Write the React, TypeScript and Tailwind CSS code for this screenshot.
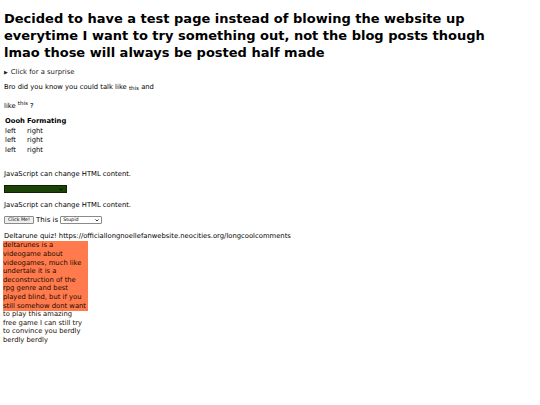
import React from "react";

export default function App() {
  return (
    <div className="w-[540px] h-[405px] bg-white text-black font-['DejaVu_Sans',sans-serif] px-[4px] overflow-hidden">
      <h1 className="w-[510px] text-[13px] font-bold leading-[17px] pt-[10px] m-0">
        Decided to have a test page instead of blowing the website up everytime I want to try something out, not the blog posts though lmao those will always be posted half made
      </h1>
      <div className="mt-[7px] text-[6.8px] leading-[9px] text-[#222]">
        <span className="text-[5px] mr-[3px]">▶</span>Click for a surprise
      </div>
      <p className="mt-[6px] text-[6.8px] leading-[9px]">
        Bro did you know you could talk like <sub className="text-[5.5px]">this</sub> and
      </p>
      <p className="mt-[10px] text-[6.8px] leading-[9px]">
        like <sup className="text-[5.5px]">this</sup> ?
      </p>
      <table className="mt-[6px] text-[6.8px] leading-[9.6px] border-separate border-spacing-0">
        <thead>
          <tr>
            <th className="font-bold text-left pl-[1px] pr-[2px]">Oooh</th>
            <th className="font-bold text-left">Formating</th>
          </tr>
        </thead>
        <tbody>
          {[0, 1, 2].map((i) => (
            <tr key={i}>
              <td className="pl-[1px]">left</td>
              <td>right</td>
            </tr>
          ))}
        </tbody>
      </table>
      <p className="mt-[15px] text-[6.8px] leading-[9px]">JavaScript can change HTML content.</p>
      <div className="mt-[6px] w-[63px] h-[8px] bg-[#1b4207] border border-[#0d2203] flex items-center justify-end pr-[3px]">
        <svg width="4" height="3" viewBox="0 0 4 3">
          <path d="M0.5 0.5 L2 2 L3.5 0.5" stroke="#000" strokeWidth="0.8" fill="none" />
        </svg>
      </div>
      <p className="mt-[8px] text-[6.8px] leading-[9px]">JavaScript can change HTML content.</p>
      <div className="mt-[5px] flex items-center gap-[2px] text-[7px] leading-[10px]">
        <div className="w-[30px] h-[8px] bg-[#efefef] border border-[#8a8a8a] rounded-[1px] text-[4.8px] leading-[6px] flex items-center justify-center">
          Click Me!
        </div>
        <span>This is</span>
        <div className="w-[42px] h-[8px] bg-white border border-[#8a8a8a] rounded-[1px] text-[4.8px] leading-[6px] flex items-center justify-between px-[2px]">
          <span>Stupid</span>
          <svg width="4" height="3" viewBox="0 0 4 3">
            <path d="M0.5 0.5 L2 2 L3.5 0.5" stroke="#000" strokeWidth="0.8" fill="none" />
          </svg>
        </div>
      </div>
      <p className="mt-[7px] text-[6.8px] leading-[9px]">
        Deltarune quiz! https://officiallongnoellefanwebsite.neocities.org/longcoolcomments
      </p>
      <div className="-ml-[1px] w-[85px] pr-[1px] h-[70px] bg-[#ff7b4d] text-[6.8px] leading-[8.6px] text-[#1a0a00]">
        deltarunes is a videogame about videogames, much like undertale it is a deconstruction of the rpg genre and best played blind, but if you still somehow dont want to play this amazing free game I can still try to convince you berdly berdly berdly
      </div>
    </div>
  );
}
